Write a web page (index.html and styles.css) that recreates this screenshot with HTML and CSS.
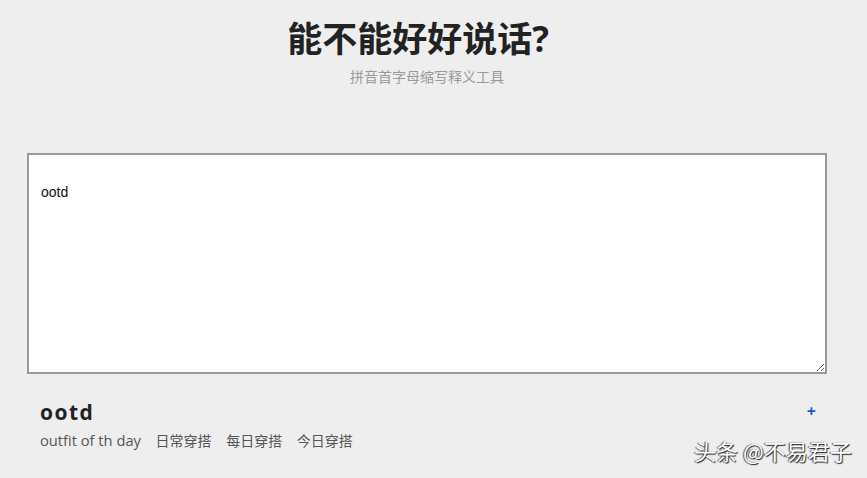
FILE: index.html
```html
<!DOCTYPE html>
<html lang="zh-CN">

<head>
  <meta charset="UTF-8">
  <title>能不能好好说话?</title>
  <link rel="stylesheet" href="styles.css">
</head>

<body>
  <div class="wrap">
    <header class="head">
      <h1 class="title">能不能好好说话?</h1>
      <p class="sub">拼音首字母缩写释义工具</p>
    </header>

    <textarea class="input">ootd</textarea>

    <div class="result">
      <div class="result-main">
        <div class="word">ootd</div>
        <div class="tags">
          <span class="en">outfit of th day</span>
          <span>日常穿搭</span>
          <span>每日穿搭</span>
          <span>今日穿搭</span>
        </div>
      </div>
      <a class="add" href="#">+</a>
    </div>
  </div>

  <div class="mark">头条 @不易君子</div>
</body>

</html>
```

FILE: styles.css
```css
html,
body {
  margin: 0;
  padding: 0;
  background: #eeeeee;
  font-family: "Open Sans", "Noto Sans CJK SC", sans-serif;
  color: #222;
}
.wrap {
  width: 800px;
  margin: 0 0 0 27px;
}
.head {
  text-align: center;
  padding-top: 17px;
}
.title {
  margin: 0;
  padding-right: 18px;
  font-size: 35px;
  line-height: 44px;
  font-weight: 700;
  color: #222;
}
.sub {
  margin: 6px 0 0 0;
  font-size: 14px;
  line-height: 19px;
  color: #999;
}
.input {
  display: block;
  box-sizing: border-box;
  width: 800px;
  height: 221px;
  margin-top: 67px;
  padding: 28px 12px;
  border: 2px solid #999;
  background: #fff;
  font-family: "Liberation Sans", "Noto Sans CJK SC", sans-serif;
  font-size: 14px;
  line-height: 18px;
  color: #111;
  outline: none;
}
.result {
  display: flex;
  justify-content: space-between;
  align-items: flex-start;
  padding: 24px 11px 0 13px;
}
.word {
  font-size: 21px;
  line-height: 28px;
  font-weight: 700;
  letter-spacing: 1.5px;
  color: #222;
}
.tags {
  margin-top: 4px;
  font-size: 14px;
  line-height: 20px;
  color: #555;
}
.tags span {
  margin-right: 11px;
}
.tags .en {
  font-size: 14.7px;
}
.add {
  font-size: 16px;
  line-height: 20px;
  font-weight: 700;
  color: #1a56db;
  text-decoration: none;
  margin-top: 3px;
}
.mark {
  position: absolute;
  left: 694px;
  top: 436px;
  font-family: "Noto Sans CJK SC", sans-serif;
  font-size: 22px;
  line-height: 28px;
  color: #fff;
  text-shadow: 1px 1px 1px #222, -1px 0 1px #444;
}
```
